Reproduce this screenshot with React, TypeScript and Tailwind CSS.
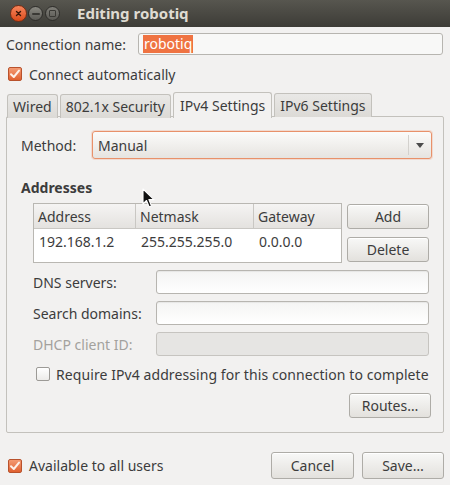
import React from "react";

const font = { fontFamily: '"Noto Sans", "DejaVu Sans", sans-serif' };

function Check({ checked, size = 14 }: { checked: boolean; size?: number }) {
  if (checked) {
    return (
      <div
        className="flex items-center justify-center rounded-[2px] border border-[#b8522c] bg-gradient-to-b from-[#f39a72] to-[#e0602e]"
        style={{ width: size, height: size }}
      >
        <svg width={size - 2} height={size - 2} viewBox="0 0 12 12">
          <path d="M2 6.2 L4.8 9 L10 2.6" fill="none" stroke="#fdf1ea" strokeWidth="2" strokeLinecap="round" strokeLinejoin="round" />
        </svg>
      </div>
    );
  }
  return (
    <div
      className="rounded-[2px] border border-[#9c9a96] bg-gradient-to-b from-[#ffffff] to-[#ecebe9]"
      style={{ width: size, height: size }}
    />
  );
}

function Btn({ children, className = "" }: { children: React.ReactNode; className?: string }) {
  return (
    <div
      className={
        "flex items-center justify-center rounded-[3px] border border-[#aeaca7] bg-gradient-to-b from-[#f8f8f7] to-[#e3e1dd] text-[#3c3c3c] shadow-[inset_0_1px_0_#ffffff] " +
        className
      }
    >
      {children}
    </div>
  );
}

function Field({ disabled = false, className = "" }: { disabled?: boolean; className?: string }) {
  return (
    <div
      className={
        "rounded-[3px] border " +
        (disabled
          ? "border-[#c6c4c0] bg-[#e6e5e3] "
          : "border-[#b7b5b0] bg-gradient-to-b from-[#f4f4f3] to-[#ffffff] shadow-[inset_0_1px_1px_rgba(0,0,0,0.06)] ") +
        className
      }
    />
  );
}

export default function App() {
  return (
    <div className="relative flex h-[485px] w-[450px] flex-col overflow-hidden bg-[#f2f1f0] text-[14px] text-[#3c3c3c]" style={font}>
      {/* window title bar */}
      <div className="flex h-[27px] items-center bg-gradient-to-b from-[#57564f] to-[#3d3c37] pl-[10px]">
        <div className="flex h-[17px] w-[17px] items-center justify-center rounded-full border border-[#7a2c12] bg-gradient-to-b from-[#f6845a] to-[#db4a17]">
          <svg width="7" height="7" viewBox="0 0 7 7">
            <path d="M1.5 1.5 L5.5 5.5 M5.5 1.5 L1.5 5.5" stroke="#3a1608" strokeWidth="1.4" strokeLinecap="round" />
          </svg>
        </div>
        <div className="ml-[1px] flex h-[15px] w-[15px] items-center justify-center rounded-full border border-[#2e2d2a] bg-gradient-to-b from-[#8a8982] to-[#5c5b56]">
          <div className="h-[2px] w-[8px] rounded-[1px] bg-[#3a3935]" />
        </div>
        <div className="ml-[2px] flex h-[15px] w-[15px] items-center justify-center rounded-full border border-[#2e2d2a] bg-gradient-to-b from-[#7f7e78] to-[#5a5954]">
          <div className="h-[7px] w-[7px] rounded-[1px] border border-[#3a3935]" />
        </div>
        <div className="ml-[17px] text-[15px] font-bold text-[#dfdbd2]">Editing robotiq</div>
      </div>

      <div className="flex flex-1 flex-col px-[6px]">
        {/* connection name */}
        <div className="mt-[6px] flex h-[22px] items-center">
          <div className="w-[132px]">Connection name:</div>
          <div className="flex h-[22px] w-[305px] items-center rounded-[3px] border border-[#b7b5b0] bg-[#f8f8f7] pl-[4px]">
            <span className="bg-[#ef7342] px-[1px] leading-[18px] text-white">robotiq</span>
          </div>
        </div>

        {/* connect automatically */}
        <div className="mt-[12px] flex h-[14px] items-center pl-[2px]">
          <Check checked />
          <span className="ml-[7px]">Connect automatically</span>
        </div>

        {/* tabs */}
        <div className="relative z-10 mt-[11px] flex h-[26px] items-end gap-[2px] pl-[1px]">
          <div className="flex h-[24px] items-center rounded-t-[3px] border border-b-0 border-[#c3c1bc] bg-gradient-to-b from-[#e9e8e6] to-[#dcdad6] px-[5px]">Wired</div>
          <div className="flex h-[24px] items-center rounded-t-[3px] border border-b-0 border-[#c3c1bc] bg-gradient-to-b from-[#e9e8e6] to-[#dcdad6] px-[5px]">802.1x Security</div>
          <div className="flex h-[26px] items-center rounded-t-[3px] border border-b-0 border-[#c3c1bc] bg-[#f2f1f0] px-[6px]">IPv4 Settings</div>
          <div className="mb-[1px] flex h-[24px] items-center rounded-t-[3px] border border-b-0 border-[#c3c1bc] bg-gradient-to-b from-[#e9e8e6] to-[#dcdad6] px-[5px]">IPv6 Settings</div>
        </div>

        {/* tab page */}
        <div className="-mt-[2px] flex h-[317px] flex-col rounded-[2px] border border-[#c3c1bc] pl-[14px] pr-[11px]">
          <div className="mt-[14px] flex h-[28px] items-center">
            <div className="w-[71px]">Method:</div>
            <div className="flex h-[28px] flex-1 items-center rounded-[3px] border border-[#e8916a] bg-gradient-to-b from-[#fbfbfa] to-[#e6e4e0] pl-[5px] shadow-[0_0_0_1px_rgba(240,150,110,0.25)]">
              <span className="flex-1">Manual</span>
              <div className="h-[20px] w-px bg-[#d3d1cd]" />
              <div className="flex w-[22px] justify-center">
                <svg width="8" height="5" viewBox="0 0 8 5">
                  <path d="M0 0 H8 L4 5 Z" fill="#4c4c4c" />
                </svg>
              </div>
            </div>
          </div>

          <div className="mt-[20px] h-[18px] font-bold leading-[18px]">Addresses</div>

          <div className="ml-[12px] mt-[6px] flex">
            {/* address table */}
            <div className="h-[60px] w-[309px] border border-[#b9b7b2] bg-white">
              <div className="flex h-[25px] border-b border-[#c9c7c3] bg-gradient-to-b from-[#f5f4f3] to-[#e4e2df]">
                <div className="flex w-[102px] items-center border-r border-[#c9c7c3] pl-[4px]">Address</div>
                <div className="flex w-[118px] items-center border-r border-[#c9c7c3] pl-[4px]">Netmask</div>
                <div className="flex flex-1 items-center pl-[4px]">Gateway</div>
              </div>
              <div className="flex h-[24px] items-center">
                <div className="w-[102px] pl-[5px]">192.168.1.2</div>
                <div className="w-[118px] pl-[5px]">255.255.255.0</div>
                <div className="flex-1 pl-[5px]">0.0.0.0</div>
              </div>
            </div>
            <div className="ml-[5px] flex flex-col">
              <Btn className="mt-[1px] h-[25px] w-[82px]">Add</Btn>
              <Btn className="mt-[8px] h-[25px] w-[82px]">Delete</Btn>
            </div>
          </div>

          <div className="ml-[12px] mt-[7px] flex h-[24px] items-center">
            <div className="w-[123px]">DNS servers:</div>
            <Field className="h-[24px] w-[273px]" />
          </div>
          <div className="ml-[12px] mt-[7px] flex h-[24px] items-center">
            <div className="w-[123px]">Search domains:</div>
            <Field className="h-[24px] w-[273px]" />
          </div>
          <div className="ml-[12px] mt-[7px] flex h-[24px] items-center">
            <div className="w-[123px] text-[#a3a19d]">DHCP client ID:</div>
            <Field disabled className="h-[24px] w-[273px]" />
          </div>

          <div className="ml-[15px] mt-[11px] flex h-[14px] items-center">
            <Check checked={false} size={14} />
            <span className="ml-[6px] tracking-[0.08px]">Require IPv4 addressing for this connection to complete</span>
          </div>

          <div className="mt-[12px] flex justify-end pr-[1px]">
            <Btn className="h-[25px] w-[82px]">Routes…</Btn>
          </div>
        </div>

        {/* footer */}
        <div className="mt-[19px] flex h-[27px] items-center">
          <div className="flex items-center pl-[2px]">
            <Check checked />
            <span className="ml-[7px]">Available to all users</span>
          </div>
          <div className="ml-auto flex gap-[8px]">
            <Btn className="h-[27px] w-[83px]">Cancel</Btn>
            <Btn className="h-[27px] w-[82px]">Save…</Btn>
          </div>
        </div>
      </div>

      {/* mouse pointer */}
      <svg className="absolute left-[142px] top-[188px]" width="14" height="21" viewBox="0 0 14 21">
        <path d="M1 1 L1 16 L4.5 12.5 L7.2 19 L9.5 18 L6.9 11.6 L12 11.6 Z" fill="#111" stroke="#fff" strokeWidth="1.1" strokeLinejoin="round" />
      </svg>
    </div>
  );
}
